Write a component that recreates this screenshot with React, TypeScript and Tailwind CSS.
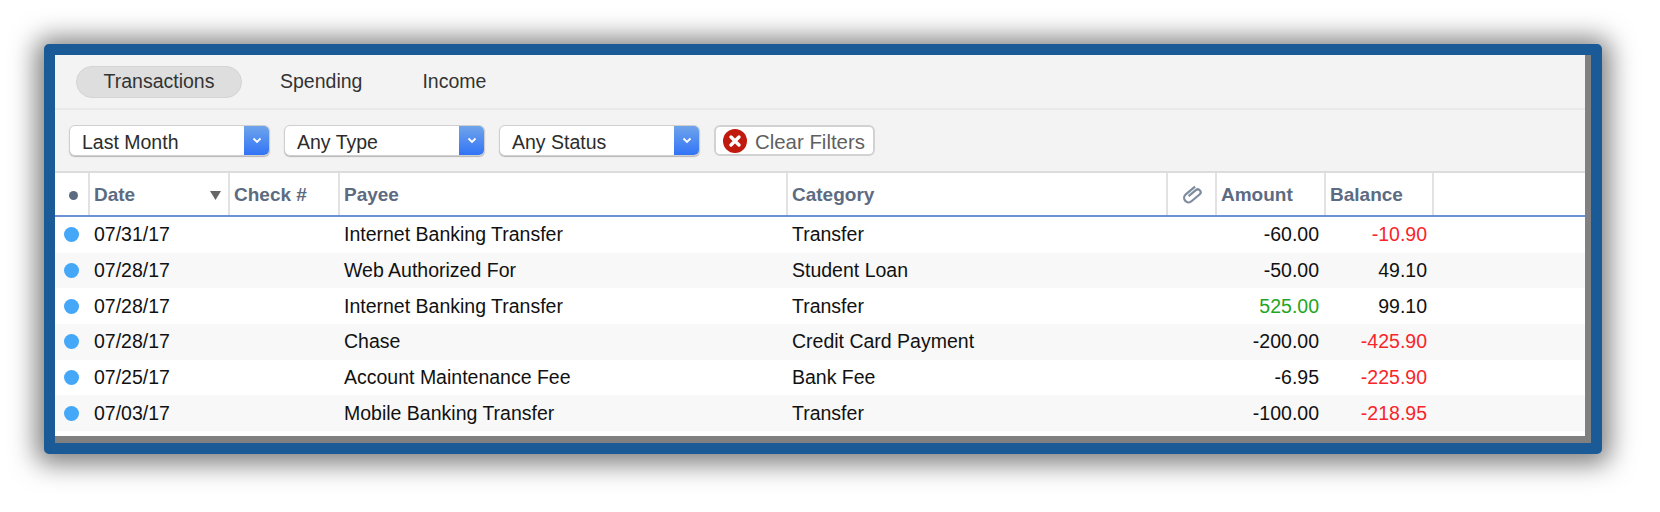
import clsx from "clsx";

type Row = {
  date: string;
  payee: string;
  category: string;
  amount: string;
  balance: string;
  income?: boolean;
  overdrawn?: boolean;
};

const rows: Row[] = [
  { date: "07/31/17", payee: "Internet Banking Transfer", category: "Transfer", amount: "-60.00", balance: "-10.90", overdrawn: true },
  { date: "07/28/17", payee: "Web Authorized For", category: "Student Loan", amount: "-50.00", balance: "49.10" },
  { date: "07/28/17", payee: "Internet Banking Transfer", category: "Transfer", amount: "525.00", balance: "99.10", income: true },
  { date: "07/28/17", payee: "Chase", category: "Credit Card Payment", amount: "-200.00", balance: "-425.90", overdrawn: true },
  { date: "07/25/17", payee: "Account Maintenance Fee", category: "Bank Fee", amount: "-6.95", balance: "-225.90", overdrawn: true },
  { date: "07/03/17", payee: "Mobile Banking Transfer", category: "Transfer", amount: "-100.00", balance: "-218.95", overdrawn: true },
];

const columns = "grid grid-cols-[35px_140px_110px_448px_380px_49px_109px_108px_1fr]";
const headCell = "flex items-center border-r-2 border-[#e2e2e2] pl-[4px] pt-[2px] text-[19px] font-bold text-[#5c6b82]";

function FilterSelect({ label, width }: { label: string; width: string }) {
  return (
    <div className={clsx("flex h-[31px] overflow-hidden rounded-[6px] border border-[#cfcfcf] bg-white shadow-[0_1px_1px_rgba(0,0,0,0.25)]", width)}>
      <span className="flex-1 pl-[12px] text-[19.5px] leading-[32px] text-[#2c2c2c]">{label}</span>
      <span className="flex w-[25px] items-center justify-center bg-gradient-to-b from-[#6fa3ea] to-[#3273f6]">
        <svg width="10" height="7" viewBox="0 0 10 7" fill="none">
          <path d="M1.5 1.5 5 5l3.5-3.5" stroke="white" strokeWidth="1.8" />
        </svg>
      </span>
    </div>
  );
}

export default function App() {
  return (
    <div className="h-[512px] w-[1660px] bg-white pl-[44px] pt-[44px] font-['Liberation_Sans',sans-serif]">
      <div className="h-[410px] w-[1558px] rounded-[5px] border-[11px] border-[#1a5a96] bg-[#808080] pb-[7px] pr-[6px] shadow-[0_2px_26px_8px_rgba(0,0,0,0.5)]">
        <div className="flex h-full flex-col bg-white">
          <div className="flex h-[55px] shrink-0 items-start border-b-2 border-[#e9e9e9] bg-[#f3f3f3] pl-[21px] pt-[11px] text-[19.5px] text-[#333]">
            <span className="flex h-[32px] w-[166px] items-center justify-center rounded-full border border-[#d4d4d4] bg-[#dedede]">Transactions</span>
            <span className="ml-[38px] leading-[31px]">Spending</span>
            <span className="ml-[60px] leading-[31px]">Income</span>
          </div>

          <div className="flex h-[63px] shrink-0 items-start gap-[14px] border-b-2 border-[#dcdcdc] bg-[#f3f3f3] pl-[14px] pt-[15px]">
            <FilterSelect label="Last Month" width="w-[201px]" />
            <FilterSelect label="Any Type" width="w-[201px]" />
            <FilterSelect label="Any Status" width="w-[201px]" />
            <div className="flex h-[31px] w-[161px] items-center rounded-[6px] border-2 border-[#d2d2d2] bg-white pl-[7px] text-[20.4px] text-[#5f5f5f]">
              <svg width="24" height="24" viewBox="0 0 24 24" className="shrink-0">
                <circle cx="12" cy="12" r="12" fill="#bf1a0d" />
                <path d="M8 8l8 8M16 8l-8 8" stroke="white" strokeWidth="3.4" strokeLinecap="round" />
              </svg>
              <span className="ml-[8px] pt-[3px]">Clear Filters</span>
            </div>
          </div>

          <div className={clsx(columns, "h-[44px] shrink-0 border-b-2 border-[#6b92d6]")}>
            <div className={clsx(headCell, "justify-center pl-0 pt-0")}>
              <span className="h-[9px] w-[9px] rounded-full bg-[#5c6b82]" />
            </div>
            <div className={clsx(headCell, "justify-between pr-[7px]")}>
              Date
              <svg width="11" height="9" viewBox="0 0 11 9"><path d="M0 0h11L5.5 9z" fill="#666" /></svg>
            </div>
            <div className={headCell}>Check #</div>
            <div className={headCell}>Payee</div>
            <div className={headCell}>Category</div>
            <div className={clsx(headCell, "justify-center pl-0 pt-0")}>
              <svg width="20" height="20" viewBox="0 0 18 18" fill="none" stroke="#7f8ca0" strokeWidth="2" className="mr-[3px]">
                <path transform="rotate(-40 9 9)" d="M16 5H5a4 4 0 0 0 0 8h9.5a2.6 2.6 0 0 0 0-5.2H6" />
              </svg>
            </div>
            <div className={headCell}>Amount</div>
            <div className={headCell}>Balance</div>
            <div />
          </div>

          <div>
            {rows.map((row, i) => (
              <div
                key={i}
                className={clsx(columns, "h-[35.7px] items-center text-[19.5px] text-[#111]", i % 2 === 1 && "bg-[#f8f8f8]")}
              >
                <span className="ml-[9px] h-[15px] w-[15px] rounded-full bg-[#45a7f8]" />
                <span className="pl-[4px]">{row.date}</span>
                <span />
                <span className="pl-[4px]">{row.payee}</span>
                <span className="pl-[4px]">{row.category}</span>
                <span />
                <span className={clsx("pr-[7px] text-right", row.income && "text-[#1fa51f]")}>{row.amount}</span>
                <span className={clsx("pr-[7px] text-right", row.overdrawn && "text-[#f8252b]")}>{row.balance}</span>
                <span />
              </div>
            ))}
          </div>
        </div>
      </div>
    </div>
  );
}
